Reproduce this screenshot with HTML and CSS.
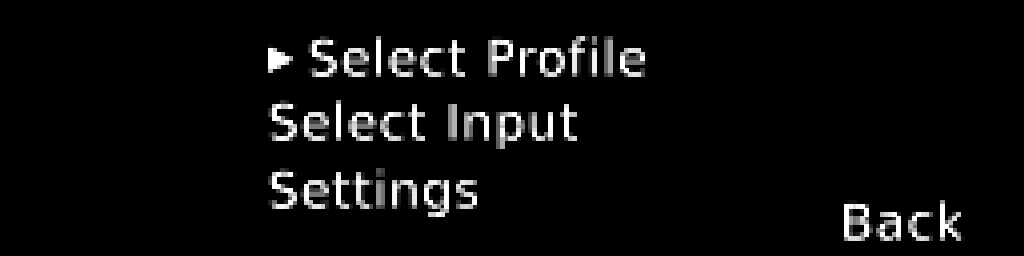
FILE: index.html
```html
<!DOCTYPE html>
<html lang="en">
<head>
  <meta charset="UTF-8" />
  <title>Menu</title>
  <link rel="stylesheet" href="styles.css">
</head>
<body>
  <svg class="defs" width="0" height="0">
    <filter id="pixelate" x="0" y="0" width="100%" height="100%" primitiveUnits="userSpaceOnUse" color-interpolation-filters="sRGB">
      <feConvolveMatrix in="SourceGraphic" order="4" kernelMatrix="1 1 1 1 1 1 1 1 1 1 1 1 1 1 1 1" divisor="16" preserveAlpha="true"/>
      <feComponentTransfer result="avg">
        <feFuncR type="linear" slope="1.6" intercept="-0.04"/>
        <feFuncG type="linear" slope="1.6" intercept="-0.04"/>
        <feFuncB type="linear" slope="1.6" intercept="-0.04"/>
      </feComponentTransfer>
      <feFlood x="2" y="2" width="1" height="1" flood-color="#fff"/>
      <feComposite width="4" height="4"/>
      <feTile result="grid"/>
      <feComposite in="avg" in2="grid" operator="in"/>
      <feMorphology operator="dilate" radius="2"/>
    </filter>
  </svg>
  <div class="screen">
    <ul class="menu">
      <li class="item selected">
        <svg class="cursor" width="24" height="24" viewBox="0 0 6 6">
          <polygon points="0,0 6,3 0,6" fill="#fff"/>
        </svg>
        <span>Select Profile</span>
      </li>
      <li class="item">Select Input</li>
      <li class="item last">Settings</li>
    </ul>
    <div class="back">Back</div>
  </div>
</body>
</html>
```

FILE: styles.css
```css
html, body {
  margin: 0;
  padding: 0;
  background: #000;
}
.defs {
  position: absolute;
}
.screen {
  width: 1024px;
  height: 256px;
  box-sizing: border-box;
  padding: 27px 59px 1px 267px;
  display: flex;
  justify-content: space-between;
  background: #000;
  color: #fff;
  font-family: "DejaVu Sans", sans-serif;
  font-size: 49px;
  line-height: 64px;
  letter-spacing: 1.6px;
  font-variant-ligatures: none;
  -webkit-text-stroke: 1.6px #000;
  paint-order: fill stroke;
  filter: url(#pixelate);
}
.menu {
  list-style: none;
  margin: 0;
  padding: 0;
}
.item {
  height: 64px;
  white-space: nowrap;
}
.item.last {
  margin-top: 4px;
}
.selected {
  display: flex;
  align-items: center;
}
.cursor {
  margin-left: 1px;
  margin-right: 15px;
}
.back {
  align-self: flex-end;
}
```
